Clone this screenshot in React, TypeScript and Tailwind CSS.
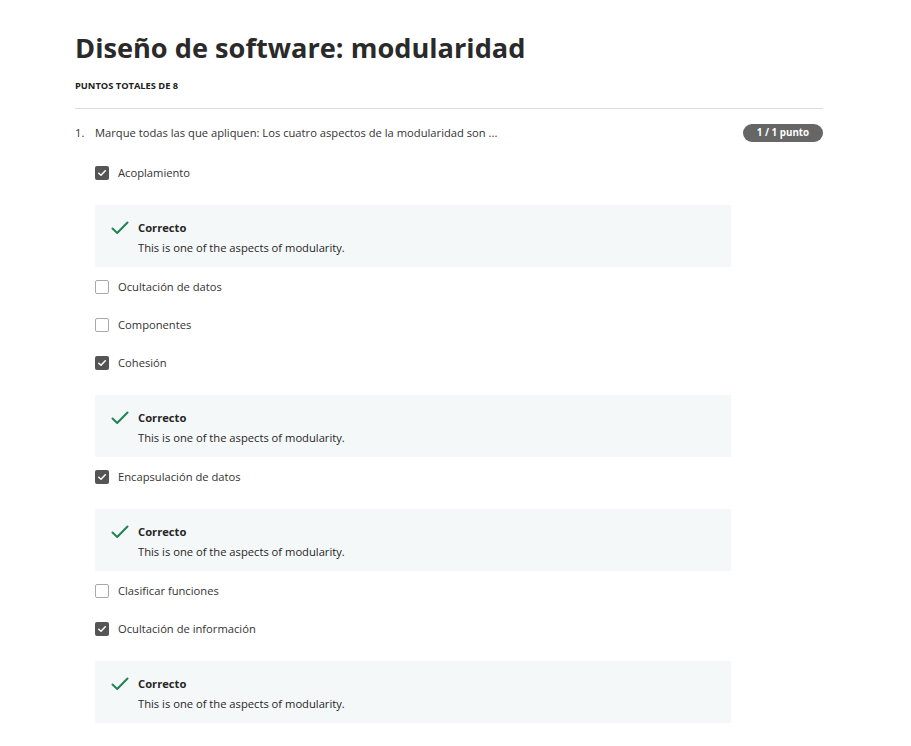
import React from "react";

type Opt = { label: string; checked: boolean };

const options: Opt[] = [
  { label: "Acoplamiento", checked: true },
  { label: "Ocultación de datos", checked: false },
  { label: "Componentes", checked: false },
  { label: "Cohesión", checked: true },
  { label: "Encapsulación de datos", checked: true },
  { label: "Clasificar funciones", checked: false },
  { label: "Ocultación de información", checked: true },
];

function Box({ checked }: { checked: boolean }) {
  if (checked) {
    return (
      <span className="flex h-[14px] w-[14px] items-center justify-center rounded-[2px] bg-[#555555]">
        <svg width="10" height="10" viewBox="0 0 10 10" fill="none">
          <path d="M1.8 5.2 L4 7.3 L8.3 2.8" stroke="white" strokeWidth="1.5" strokeLinecap="round" strokeLinejoin="round" />
        </svg>
      </span>
    );
  }
  return <span className="block h-[14px] w-[14px] rounded-[2px] border border-[#a9a9a9] bg-white" />;
}

function Feedback() {
  return (
    <div className="mb-[1px] mt-[13px] flex h-[62px] w-[636px] gap-[9px] bg-[#f5f8f8] pl-[16px] pt-[15px]">
      <svg width="18" height="14" viewBox="0 0 18 14" fill="none" className="mt-[1px]">
        <path d="M1.5 7.5 L6.2 12 L16.5 1.5" stroke="#1f8354" strokeWidth="2" strokeLinecap="round" strokeLinejoin="round" />
      </svg>
      <div className="flex flex-col">
        <span className="text-[11.2px] font-bold leading-[15px] text-[#262626]">Correcto</span>
        <span className="mt-[5px] text-[11.2px] leading-[15px] text-[#262626]">This is one of the aspects of modularity.</span>
      </div>
    </div>
  );
}

export default function App() {
  return (
    <div className="min-h-[746px] bg-white text-[#1f1f1f]" style={{ fontFamily: '"Open Sans", sans-serif' }}>
      <div className="ml-[75px] w-[748px] pt-[29px]">
        <h1 className="text-[27.2px] font-bold leading-[38px] text-[#2a2a2a]">Diseño de software: modularidad</h1>
        <div className="mt-[13px] text-[9.3px] font-bold leading-[12px] text-[#222]">PUNTOS TOTALES DE 8</div>
        <div className="mt-[16px] h-px bg-[#dcdcdc]" />
        <div className="mt-[15px] flex items-center justify-between">
          <div className="flex text-[11.2px] leading-[18px] text-[#333]">
            <span className="w-[20px]">1.</span>
            <span>Marque todas las que apliquen: Los cuatro aspectos de la modularidad son ...</span>
          </div>
          <span className="flex h-[18px] w-[80px] items-center justify-center rounded-full bg-[#666666] text-[9.8px] font-bold text-white">1 / 1 punto</span>
        </div>
        <div className="ml-[20px] mt-[12px] flex flex-col">
          {options.map((o) => (
            <div key={o.label} className="flex flex-col">
              <div className="flex h-[38px] items-center gap-[9px]">
                <Box checked={o.checked} />
                <span className="text-[11.2px] text-[#333]">{o.label}</span>
              </div>
              {o.checked && <Feedback />}
            </div>
          ))}
        </div>
      </div>
    </div>
  );
}
